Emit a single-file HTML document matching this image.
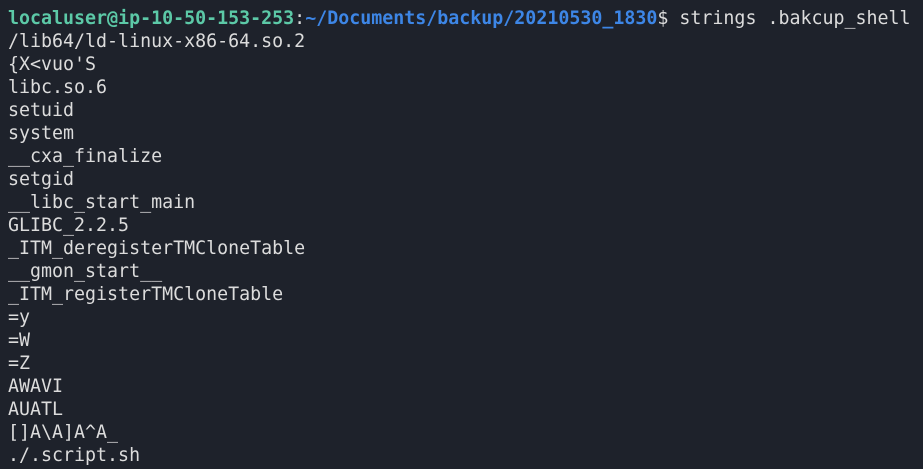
<!DOCTYPE html>
<html><head><meta charset="utf-8"><style>
html,body{margin:0;padding:0;background:#1e222b;width:923px;height:469px;overflow:hidden}
pre{margin:0;padding:7px 0 0 8px;font-family:"DejaVu Sans Mono","Liberation Mono",monospace;font-size:18.3px;line-height:23px;color:#dcdcdc;white-space:pre}
.g{color:#5cc9a7;font-weight:bold}.b{color:#3d86e6;font-weight:bold}
</style></head><body><pre><span class="g">localuser@ip-10-50-153-253</span>:<span class="b">~/Documents/backup/20210530_1830</span>$ strings .bakcup_shell
/lib64/ld-linux-x86-64.so.2
{X&lt;vuo'S
libc.so.6
setuid
system
__cxa_finalize
setgid
__libc_start_main
GLIBC_2.2.5
_ITM_deregisterTMCloneTable
__gmon_start__
_ITM_registerTMCloneTable
=y
=W
=Z
AWAVI
AUATL
[]A\A]A^A_
./.script.sh</pre></body></html>
